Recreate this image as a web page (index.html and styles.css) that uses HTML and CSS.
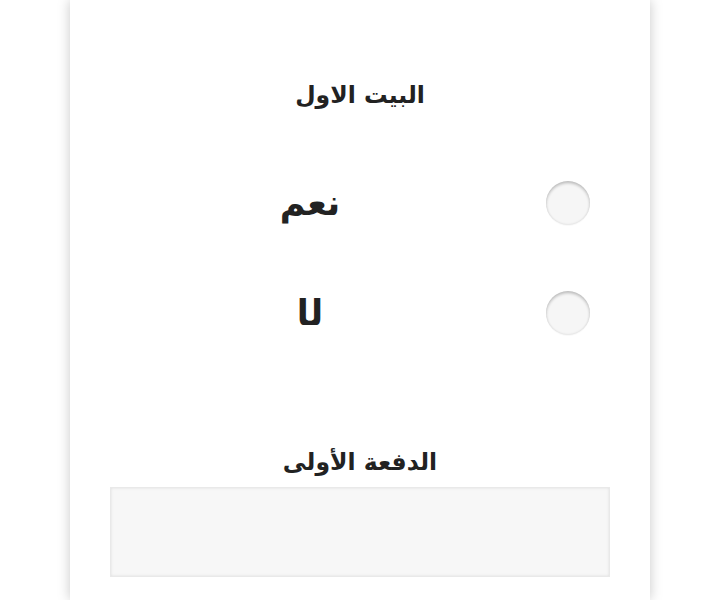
FILE: index.html
```html
<!DOCTYPE html>
<html lang="ar" dir="rtl">
<head>
<meta charset="utf-8">
<link rel="stylesheet" href="styles.css">
</head>
<body>
<div class="card">
  <div class="field-title first">البيت الاول</div>
  <label class="choice">
    <span class="radio"></span>
    <span class="choice-text">نعم</span>
  </label>
  <label class="choice">
    <span class="radio"></span>
    <span class="choice-text">ل&#x200D;ا</span>
  </label>
  <div class="field-title second">الدفعة الأولى</div>
  <div class="input-box"></div>
</div>
</body>
</html>
```
FILE: styles.css
```css
html, body {
  margin: 0;
  padding: 0;
  background: #ffffff;
}
body {
  font-family: "DejaVu Sans", sans-serif;
  color: #222222;
  overflow: hidden;
  height: 600px;
}
.card {
  width: 580px;
  height: 600px;
  margin-right: 70px;
  background: #ffffff;
  box-shadow: 0 0 12px rgba(0, 0, 0, 0.22);
  padding: 0 40px;
  box-sizing: border-box;
  display: flex;
  flex-direction: column;
}
.field-title {
  text-align: center;
  font-weight: bold;
  font-size: 23.5px;
  line-height: 30px;
}
.field-title.first {
  margin-top: 80px;
}
.choice {
  display: grid;
  grid-template-columns: 100px 1fr;
  align-items: center;
  height: 110px;
}
.choice:first-of-type {
  margin-top: 38px;
}
.radio {
  width: 44px;
  height: 44px;
  border-radius: 50%;
  background: #f6f6f6;
  box-shadow: inset 0 2px 3px rgba(0, 0, 0, 0.24), inset 0 -1px 2px rgba(0, 0, 0, 0.06), 0 1px 1px rgba(0,0,0,0.03);
  justify-self: start;
  margin-right: 20px;
}
.choice-text {
  text-align: center;
  font-weight: bold;
  font-size: 35px;
  line-height: 40px;
}
.field-title.second {
  margin-top: 79px;
}
.input-box {
  margin-top: 10px;
  height: 90px;
  flex: none;
  background: #f7f7f7;
  box-shadow: inset 0 0 3px rgba(0, 0, 0, 0.1);
  border: 1px solid #e9e9e9;
  box-sizing: border-box;
}
```
